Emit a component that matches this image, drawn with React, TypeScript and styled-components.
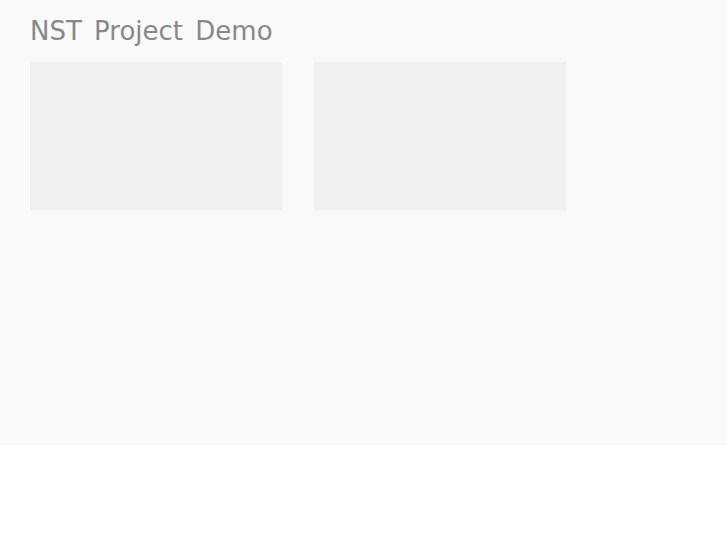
import React from 'react';
import styled, { createGlobalStyle } from 'styled-components';

const GlobalStyle = createGlobalStyle`
  html, body {
    margin: 0;
    padding: 0;
    background: #ffffff;
  }
`;

const Page = styled.div`
  height: 445px;
  box-sizing: border-box;
  padding: 14px 30px 0;
  background: #f9f9f9;
  font-family: 'DejaVu Sans', sans-serif;
`;

const Title = styled.h1`
  margin: 0 0 14px;
  font-size: 26px;
  font-weight: normal;
  line-height: 34px;
  word-spacing: 4px;
  color: #888888;
`;

const Grid = styled.div`
  display: flex;
  gap: 31px;
`;

const Card = styled.div`
  width: 252px;
  height: 148px;
  background: #f0f0f0;
  border: 1px solid #f6f6f6;
  border-width: 0 1px 1px 0;
`;

const App: React.FC = () => (
  <>
    <GlobalStyle />
    <Page>
      <Title>NST Project Demo</Title>
      <Grid>
        <Card />
        <Card />
      </Grid>
    </Page>
  </>
);

export default App;
